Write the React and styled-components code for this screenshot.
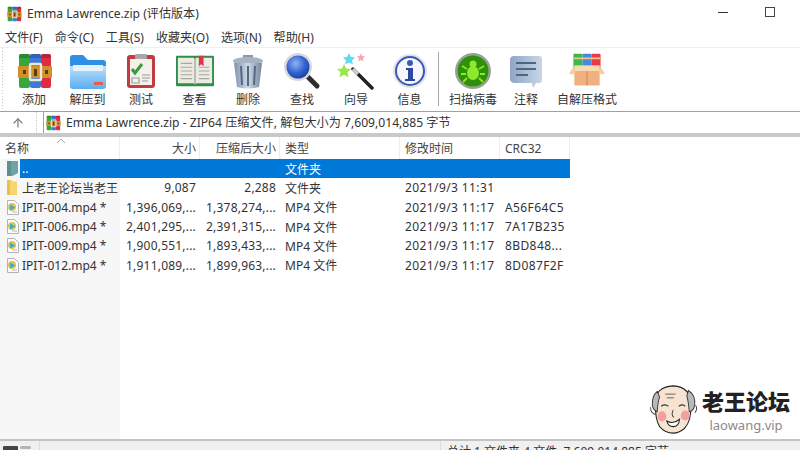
import React from 'react'
import styled, { createGlobalStyle } from 'styled-components'
import { ArrowUp } from 'lucide-react'

const GlobalStyle = createGlobalStyle`
  html, body { margin: 0; padding: 0; background: #fff; overflow: hidden; }
  body { font-family: "Noto Sans", "Noto Sans CJK SC", sans-serif; font-size: 12px; color: #333; }
`

const Window = styled.div`
  position: relative;
  width: 800px;
  height: 450px;
  display: flex;
  flex-direction: column;
  overflow: hidden;
  background: #fff;
`

const TitleBar = styled.div`
  height: 28px;
  flex: none;
  display: flex;
  align-items: center;
  padding-left: 6px;
  gap: 5px;
`

const TitleText = styled.span`
  font-size: 12.1px;
  color: #333;
  margin-top: -2px;
`

const WindowControls = styled.div`
  margin-left: auto;
  display: flex;
  align-items: center;
  gap: 37px;
  padding-right: 25px;
  margin-top: -4px;
`

const MinimizeMark = styled.div`
  width: 10px;
  height: 1px;
  background: #333;
`

const MaximizeMark = styled.div`
  width: 8px;
  height: 8px;
  border: 1px solid #444;
`

const MenuBar = styled.div`
  height: 20px;
  flex: none;
  display: flex;
  align-items: center;
  gap: 12px;
  padding: 0 0 2px 5px;
  box-sizing: border-box;
  border-bottom: 1px solid #f0f0f0;
`

const MenuItem = styled.span`
  font-size: 12.1px;
  color: #333;
  white-space: nowrap;
`

const Toolbar = styled.div`
  height: 63px;
  flex: none;
  display: flex;
  align-items: flex-start;
  padding-left: 7px;
  border-bottom: 1px solid #a0a0a0;
  background-image: linear-gradient(#c8c8c8 50%, transparent 50%);
  background-size: 1px 3px;
  background-repeat: repeat-y;
  background-position: 2px 0;
`

const ToolButton = styled.div`
  width: ${p => p.$width}px;
  flex: none;
  display: flex;
  flex-direction: column;
  align-items: center;
  padding-top: 4px;
`

const ToolLabel = styled.span`
  font-size: 12px;
  line-height: 15px;
  margin-top: 2px;
  color: #333;
  white-space: nowrap;
`

const ToolIconBox = styled.div`
  width: 38px;
  height: 38px;
  display: flex;
  align-items: center;
  justify-content: center;
`

const ToolDivider = styled.div`
  width: 1px;
  height: 54px;
  margin: 4px 0 0 2px;
  background: #a8a8a8;
  flex: none;
`

const PathBar = styled.div`
  height: 21px;
  flex: none;
  display: flex;
  align-items: center;
`

const UpButton = styled.div`
  width: 37px;
  height: 21px;
  display: flex;
  align-items: center;
  justify-content: center;
  color: #777;
  flex: none;
  box-sizing: border-box;
  border-right: 1px dotted #c8c8c8;
`

const PathField = styled.div`
  flex: 1;
  height: 21px;
  display: flex;
  align-items: center;
  gap: 5px;
  padding-left: 1px;
  margin-left: 6px;
  border-left: 1px solid #a0a0a0;
`

const PathText = styled.span`
  font-size: 12.15px;
  color: #333;
  white-space: nowrap;
  margin-top: -2px;
`

const ListArea = styled.div`
  flex: 1;
  min-height: 0;
  border-top: 4px solid #c9c9c9;
  position: relative;
  background: linear-gradient(90deg, #f7f7f7 120px, #fff 120px);
`

const HeaderRow = styled.div`
  height: 22px;
  display: grid;
  grid-template-columns: 120px 80px 80px 120px 100px 70px;
  background: #fff;
  width: 570px;
  position: relative;
`

const HeaderCell = styled.div`
  display: flex;
  align-items: center;
  justify-content: ${p => (p.$right ? 'flex-end' : 'flex-start')};
  padding: ${p => (p.$right ? '0 3px 0 0' : '0 0 0 5px')};
  font-size: 12px;
  color: #444;
  border-right: 1px solid #eee;
  white-space: nowrap;
`

const SortCaret = styled.svg`
  position: absolute;
  left: 56px;
  top: 1px;
`

const FileRow = styled.div`
  height: 19.3px;
  display: grid;
  grid-template-columns: 120px 80px 80px 120px 100px 70px;
  width: 570px;
  font-size: 12px;
  color: ${p => (p.$selected ? '#fff' : '#333')};
  background: ${p =>
    p.$selected ? 'linear-gradient(90deg, transparent 20px, #0078d7 20px)' : 'transparent'};
`

const Cell = styled.div`
  display: flex;
  align-items: center;
  justify-content: ${p => (p.$right ? 'flex-end' : 'flex-start')};
  padding: ${p => (p.$right ? '0 4px 0 0' : '0 0 0 5px')};
  letter-spacing: ${p => p.$spacing || 0}px;
  white-space: nowrap;
  overflow: hidden;
  min-width: 0;
`

const NameCell = styled.div`
  display: flex;
  align-items: center;
  gap: 3px;
  padding-left: 5px;
  white-space: nowrap;
  overflow: hidden;
`

const IconSlot = styled.span`
  width: 14px;
  flex: none;
  display: flex;
  justify-content: center;
`

const StatusBar = styled.div`
  height: 9px;
  flex: none;
  display: flex;
  background: #f0f0f0;
  border-top: 2px solid #c4c4c4;
  overflow: hidden;
`

const StatusLeft = styled.div`
  width: 40px;
  flex: none;
  display: flex;
  gap: 2px;
  padding: 5px 0 0 3px;
  box-sizing: border-box;
  border-right: 1px solid #dcdcdc;
`

const DriveMark = styled.div`
  width: 15px;
  height: 8px;
  background: #444;
  border-radius: 1px;
`

const KeyMark = styled.div`
  width: 11px;
  height: 3px;
  background: #b5b5b5;
  border-radius: 2px;
`

const StatusRight = styled.div`
  margin-left: 400px;
  padding: 3px 0 0 6px;
  border-left: 1px solid #dcdcdc;
  font-size: 12px;
  line-height: 15px;
  color: #333;
  white-space: nowrap;
`

const Watermark = styled.div`
  position: absolute;
  left: 650px;
  top: 383px;
  display: flex;
  align-items: flex-start;
  gap: 4px;
`

const WatermarkText = styled.div`
  display: flex;
  flex-direction: column;
  align-items: center;
  padding-top: 1px;
`

const BrandName = styled.span`
  font-family: "Noto Sans CJK SC", sans-serif;
  font-weight: 900;
  font-size: 22px;
  line-height: 32px;
  color: #222;
  white-space: nowrap;
`

const BrandUrl = styled.span`
  font-size: 13px;
  line-height: 18px;
  color: #8a8a8a;
`

const RarIcon = ({ size = 38 }) => (
  <svg width={size} height={size} viewBox="-1 0 38 38">
    <rect x="3" y="2" width="11" height="34" rx="2" fill="#35a838" />
    <rect x="14" y="2" width="11" height="34" rx="2" fill="#3f78d8" />
    <rect x="25" y="2" width="10" height="34" rx="2" fill="#e02c40" />
    <rect x="3" y="2" width="32" height="4" fill="#000" opacity=".18" />
    <rect x="2" y="14" width="34" height="12" rx="1" fill="#d0902e" />
    <rect x="14" y="12" width="11" height="16" rx="1" fill="none" stroke="#eee6d2" strokeWidth="2.4" />
    <rect x="7" y="18" width="3" height="4" fill="#5e3e10" />
    <rect x="18" y="17" width="3" height="7" fill="#5e3e10" />
    <rect x="29" y="18" width="3" height="4" fill="#5e3e10" />
  </svg>
)

const FolderIcon = () => (
  <svg width="38" height="38" viewBox="0 0 38 38">
    <defs>
      <linearGradient id="folderFront" x1="0" y1="0" x2="0" y2="1">
        <stop offset="0" stopColor="#bfe0fb" />
        <stop offset="1" stopColor="#58aef2" />
      </linearGradient>
    </defs>
    <path d="M1 6q0-3 3-3h10l5 5h15q3 0 3 3v22q0 3-3 3H4q-3 0-3-3z" fill="#2f8fe6" />
    <path d="M1 14h36v20q0 3-3 3H4q-3 0-3-3z" fill="url(#folderFront)" />
    <path d="M4 13h30v6H4z" fill="#e4f2fd" />
    <path d="M25 30h9v3h-9z" fill="#e0604a" />
  </svg>
)

const TestIcon = () => (
  <svg width="38" height="38" viewBox="0 0 38 38">
    <rect x="5" y="3" width="28" height="33" rx="3" fill="#c23a42" />
    <rect x="8" y="7" width="22" height="26" fill="#f3f1ea" />
    <rect x="13" y="2" width="12" height="5" rx="1" fill="#a8a8a8" />
    <path d="M10 17l3 4 7-9" fill="none" stroke="#3a9a3a" strokeWidth="3" />
    <path d="M10 26h7v5h-7zM20 23h8M20 26h8M20 29h6" fill="none" stroke="#9a9a9a" strokeWidth="1.2" />
  </svg>
)

const BookIcon = () => (
  <svg width="40" height="38" viewBox="0 0 40 38">
    <rect x="0" y="3" width="40" height="32" rx="1" fill="#2f8f4a" />
    <path d="M2 5h17l1 2 1-2h17v27H22l-2 1-2-1H2z" fill="#ecebe2" />
    <path d="M5 11h12M5 15h12M5 19h12M5 23h12M5 27h12M24 15h11M24 19h11M24 23h11M24 27h11" stroke="#a8a8a0" strokeWidth="1.2" />
    <path d="M24 3h5v11l-2.500-2-2.500 2z" fill="#d63a48" />
    <path d="M20 6v27" stroke="#8a8a80" strokeWidth="1" />
  </svg>
)

const TrashIcon = () => (
  <svg width="34" height="38" viewBox="0 0 34 38">
    <defs>
      <linearGradient id="bin" x1="0" x2="1">
        <stop offset="0" stopColor="#7f93ad" />
        <stop offset=".5" stopColor="#cfd9e6" />
        <stop offset="1" stopColor="#72859e" />
      </linearGradient>
    </defs>
    <path d="M12 3h10v4h-2V5h-6v2h-2z" fill="#8a98a8" />
    <ellipse cx="17" cy="9" rx="15" ry="4" fill="#a7b3c2" />
    <path d="M3 11h28l-3 24q-11 3-22 0z" fill="url(#bin)" />
    <path d="M10 14l1 19M17 14v20M24 14l-1 19" stroke="#56687f" strokeWidth="2" />
  </svg>
)

const SearchIcon = () => (
  <svg width="38" height="38" viewBox="0 0 38 38">
    <defs>
      <radialGradient id="lens" cx=".4" cy=".35" r=".7">
        <stop offset="0" stopColor="#8fb4f4" />
        <stop offset=".6" stopColor="#2f62d0" />
        <stop offset="1" stopColor="#1d3f98" />
      </radialGradient>
    </defs>
    <path d="M24 24l10 10" stroke="#2e2e2e" strokeWidth="5" strokeLinecap="round" />
    <circle cx="15" cy="15" r="14" fill="#d8d8d8" />
    <circle cx="15" cy="15" r="11.500" fill="url(#lens)" />
  </svg>
)

const WizardIcon = () => (
  <svg width="38" height="38" viewBox="0 0 38 38">
    <path d="M16 17l19 19" stroke="#222" strokeWidth="3.500" strokeLinecap="round" />
    <path d="M16 17l5 5" stroke="#ccc" strokeWidth="3.500" />
    <path d="M12 1l2 4 4 .5-3 3 1 4-4-2-4 2 1-4-3-3 4-.5z" fill="#5fd8f0" />
    <path d="M24 1l1 3 3 .3-2 2 .6 3-2.600-1.400-2.600 1.400.6-3-2-2 3-.3z" fill="#f5a8b0" />
    <path d="M7 12l2 4.500 5 .6-3.500 3.200 1 5-4.500-2.500L2.500 25.300l1-5L0 17.100l5-.6z" fill="#9ce84a" />
  </svg>
)

const InfoIcon = () => (
  <svg width="38" height="38" viewBox="0 0 38 38">
    <circle cx="19" cy="19" r="17" fill="#e2e4ea" />
    <circle cx="19" cy="19" r="14" fill="#f6f7fb" stroke="#3a58b8" strokeWidth="2" />
    <circle cx="19" cy="11" r="3" fill="#3a58b8" />
    <path d="M15 16h7v11h2v2H14v-2h3v-9h-2z" fill="#2b47a4" />
  </svg>
)

const BugIcon = () => (
  <svg width="38" height="38" viewBox="0 0 38 38">
    <circle cx="19" cy="19" r="18" fill="#9aa294" />
    <circle cx="19" cy="19" r="15.500" fill="#2f900a" />
    <ellipse cx="19" cy="21" rx="6" ry="7" fill="#8ee82c" />
    <circle cx="19" cy="12" r="3.500" fill="#8ee82c" />
    <path d="M13 17l-5-3M25 17l5-3M12 22H7M26 22h5M13 26l-4 4M25 26l4 4" stroke="#8ee82c" strokeWidth="1.800" />
  </svg>
)

const CommentIcon = () => (
  <svg width="34" height="38" viewBox="0 0 34 38">
    <defs>
      <linearGradient id="bubble" x1="0" x2="1">
        <stop offset="0" stopColor="#8fa6c4" />
        <stop offset="1" stopColor="#c9d6e6" />
      </linearGradient>
    </defs>
    <path d="M5 4h25q3 0 3 3v21q0 3-3 3h-3l-3 5-1-5H5q-4-1-4-4V8q0-4 4-4z" fill="url(#bubble)" />
    <path d="M7 11h20M7 17h20M7 23h12" stroke="#4e6684" strokeWidth="2.200" />
  </svg>
)

const SfxIcon = () => (
  <svg width="42" height="38" viewBox="0 0 42 38">
    <rect x="6" y="0" width="10" height="16" rx="1" fill="#3ab84a" />
    <rect x="16" y="0" width="10" height="16" rx="1" fill="#4a88e0" />
    <rect x="26" y="0" width="10" height="16" rx="1" fill="#e83a4a" />
    <rect x="6" y="4" width="30" height="2" fill="#e6c878" />
    <path d="M7 13h28v22H7z" fill="#f0b080" />
    <path d="M7 13h28l-1 6H8z" fill="#f8dcae" />
    <path d="M7 13L1 22l6 1zM35 13l6 9-6 1z" fill="#f6ce9c" />
    <path d="M21 19v16" stroke="#c88858" strokeWidth="1" />
  </svg>
)

const VideoFileIcon = () => (
  <svg width="13" height="15" viewBox="0 0 13 15">
    <path d="M1.500.5h7l4 4v10h-11z" fill="#fbfbfb" stroke="#b4b4b4" />
    <circle cx="6" cy="7" r="4" fill="#e6c24a" />
    <path d="M4 4.500L9.500 7.500 4 10.500z" fill="#39b0c8" />
    <path d="M6 12h5" stroke="#b8b8b8" />
  </svg>
)

const SmallFolderIcon = () => (
  <svg width="10" height="15" viewBox="0 0 10 15">
    <path d="M0 0h5l1 1.500h4V15H0z" fill="#f7d470" />
    <path d="M0 0h3v15H0z" fill="#ecbc4c" />
  </svg>
)

const ParentDirIcon = () => (
  <svg width="11" height="16" viewBox="0 0 11 16">
    <path d="M0 0h11v12l-5.500 3L0 15z" fill="#6fa3a6" />
    <path d="M0 0h4v15H0z" fill="#5a8f94" />
  </svg>
)

const OldManFace = () => (
  <svg width="48" height="52" viewBox="0 0 60 56" preserveAspectRatio="none">
    <path d="M7 22Q6 4 29 3q22 1 22 20 1 18-8 26-7 5-14 5-10 0-17-7Q6 38 7 22z" fill="#f6e3d2" stroke="#222" strokeWidth="1.300" />
    <path d="M9 9Q2 14 3 24q1 5 6 7 1-12 3-16zM48 8q9 5 8 15-1 7-7 8-1-12-3-17z" fill="#b9b9b9" stroke="#333" strokeWidth="1.100" />
    <path d="M1 26q-1 6 6 8M57 24q3 4-1 8" fill="none" stroke="#333" strokeWidth="1.100" />
    <path d="M19 12h13M21 16h9" fill="none" stroke="#555" strokeWidth="1" />
    <circle cx="15" cy="36" r="5.500" fill="#f4a0a0" />
    <circle cx="44" cy="35" r="5.500" fill="#f4a0a0" />
    <path d="M14 25q5-3 9 0M36 25q5-3 8 0" fill="none" stroke="#333" strokeWidth="1.300" />
    <path d="M29 29q-3 6 1 8" fill="none" stroke="#333" strokeWidth="1.100" />
    <path d="M21 41q8 4 16-2-1 8-8 8-6 0-8-6z" fill="#fff" stroke="#222" strokeWidth="1.200" />
  </svg>
)

const tools = [
  { label: '添加', icon: <RarIcon />, width: 54 },
  { label: '解压到', icon: <FolderIcon />, width: 53 },
  { label: '测试', icon: <TestIcon />, width: 54 },
  { label: '查看', icon: <BookIcon />, width: 53 },
  { label: '删除', icon: <TrashIcon />, width: 54 },
  { label: '查找', icon: <SearchIcon />, width: 54 },
  { label: '向导', icon: <WizardIcon />, width: 54 },
  { label: '信息', icon: <InfoIcon />, width: 53 },
]

const tools2 = [
  { label: '扫描病毒', icon: <BugIcon />, width: 68 },
  { label: '注释', icon: <CommentIcon />, width: 38 },
  { label: '自解压格式', icon: <SfxIcon />, width: 84 },
]

const menus = ['文件(F)', '命令(C)', '工具(S)', '收藏夹(O)', '选项(N)', '帮助(H)']

const files = [
  { name: '上老王论坛当老王', size: '9,087', packed: '2,288', type: '文件夹', time: '2021/9/3 11:31', crc: '', folder: true },
  { name: 'IPIT-004.mp4 *', size: '1,396,069,...', packed: '1,378,274,...', type: 'MP4 文件', time: '2021/9/3 11:17', crc: 'A56F64C5' },
  { name: 'IPIT-006.mp4 *', size: '2,401,295,...', packed: '2,391,315,...', type: 'MP4 文件', time: '2021/9/3 11:17', crc: '7A17B235' },
  { name: 'IPIT-009.mp4 *', size: '1,900,551,...', packed: '1,893,433,...', type: 'MP4 文件', time: '2021/9/3 11:17', crc: '8BD848...' },
  { name: 'IPIT-012.mp4 *', size: '1,911,089,...', packed: '1,899,963,...', type: 'MP4 文件', time: '2021/9/3 11:17', crc: '8D087F2F' },
]

const App = () => {
  return (
    <Window>
      <GlobalStyle />
      <TitleBar>
        <RarIcon size={16} />
        <TitleText>Emma Lawrence.zip (评估版本)</TitleText>
        <WindowControls>
          <MinimizeMark />
          <MaximizeMark />
        </WindowControls>
      </TitleBar>
      <MenuBar>
        {menus.map(m => <MenuItem key={m}>{m}</MenuItem>)}
      </MenuBar>
      <Toolbar>
        {tools.map(t => (
          <ToolButton key={t.label} $width={t.width}>
            <ToolIconBox>{t.icon}</ToolIconBox>
            <ToolLabel>{t.label}</ToolLabel>
          </ToolButton>
        ))}
        <ToolDivider />
        {tools2.map(t => (
          <ToolButton key={t.label} $width={t.width}>
            <ToolIconBox>{t.icon}</ToolIconBox>
            <ToolLabel>{t.label}</ToolLabel>
          </ToolButton>
        ))}
      </Toolbar>
      <PathBar>
        <UpButton><ArrowUp size={14} strokeWidth={2} /></UpButton>
        <PathField>
          <RarIcon size={16} />
          <PathText>Emma Lawrence.zip - ZIP64 压缩文件, 解包大小为 7,609,014,885 字节</PathText>
        </PathField>
      </PathBar>
      <ListArea>
        <HeaderRow>
          <SortCaret width="10" height="6" viewBox="0 0 10 6">
            <path d="M1 5l4-4 4 4" fill="none" stroke="#aaa" />
          </SortCaret>
          <HeaderCell>名称</HeaderCell>
          <HeaderCell $right>大小</HeaderCell>
          <HeaderCell $right>压缩后大小</HeaderCell>
          <HeaderCell>类型</HeaderCell>
          <HeaderCell>修改时间</HeaderCell>
          <HeaderCell>CRC32</HeaderCell>
        </HeaderRow>
        <FileRow $selected>
          <NameCell>
            <IconSlot><ParentDirIcon /></IconSlot>
            <span>..</span>
          </NameCell>
          <Cell />
          <Cell />
          <Cell>文件夹</Cell>
          <Cell />
          <Cell />
        </FileRow>
        {files.map(f => (
          <FileRow key={f.name}>
            <NameCell>
              <IconSlot>{f.folder ? <SmallFolderIcon /> : <VideoFileIcon />}</IconSlot>
              <span>{f.name}</span>
            </NameCell>
            <Cell $right $spacing={0.2}>{f.size}</Cell>
            <Cell $right $spacing={0.2}>{f.packed}</Cell>
            <Cell>{f.type}</Cell>
            <Cell $spacing={0.4}>{f.time}</Cell>
            <Cell $spacing={0.4}>{f.crc}</Cell>
          </FileRow>
        ))}
      </ListArea>
      <StatusBar>
        <StatusLeft>
          <DriveMark />
          <KeyMark />
        </StatusLeft>
        <StatusRight>总计 1 文件夹 4 文件, 7,609,014,885 字节</StatusRight>
      </StatusBar>
      <Watermark>
        <OldManFace />
        <WatermarkText>
          <BrandName>老王论坛</BrandName>
          <BrandUrl>laowang.vip</BrandUrl>
        </WatermarkText>
      </Watermark>
    </Window>
  )
}

export default App
